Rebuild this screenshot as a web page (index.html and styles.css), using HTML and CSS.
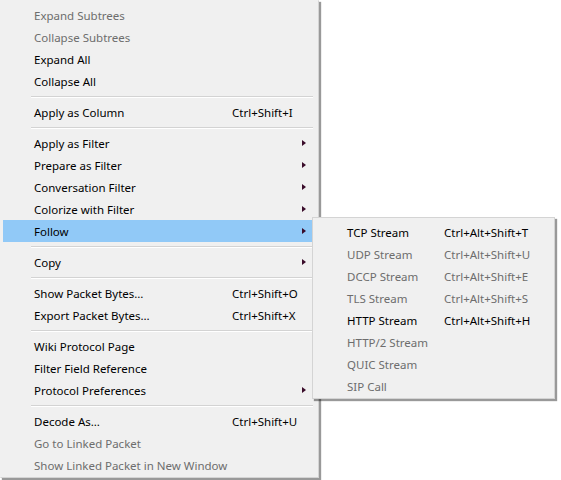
FILE: index.html
```html
<!DOCTYPE html>
<html>
<head>
<meta charset="utf-8">
<link rel="stylesheet" href="styles.css">
</head>
<body>
<div class="menu main">
  <div class="item dis"><span class="label">Expand Subtrees</span></div>
  <div class="item dis"><span class="label">Collapse Subtrees</span></div>
  <div class="item"><span class="label">Expand All</span></div>
  <div class="item"><span class="label">Collapse All</span></div>
  <div class="sep"></div>
  <div class="item"><span class="label">Apply as Column</span><span class="key">Ctrl+Shift+I</span></div>
  <div class="sep"></div>
  <div class="item"><span class="label">Apply as Filter</span><span class="arrow"></span></div>
  <div class="item"><span class="label">Prepare as Filter</span><span class="arrow"></span></div>
  <div class="item"><span class="label">Conversation Filter</span><span class="arrow"></span></div>
  <div class="item"><span class="label">Colorize with Filter</span><span class="arrow"></span></div>
  <div class="item active"><span class="label">Follow</span><span class="arrow"></span></div>
  <div class="sep"></div>
  <div class="item"><span class="label">Copy</span><span class="arrow"></span></div>
  <div class="sep"></div>
  <div class="item"><span class="label">Show Packet Bytes…</span><span class="key">Ctrl+Shift+O</span></div>
  <div class="item"><span class="label">Export Packet Bytes…</span><span class="key">Ctrl+Shift+X</span></div>
  <div class="sep"></div>
  <div class="item"><span class="label">Wiki Protocol Page</span></div>
  <div class="item"><span class="label">Filter Field Reference</span></div>
  <div class="item"><span class="label">Protocol Preferences</span><span class="arrow"></span></div>
  <div class="sep"></div>
  <div class="item"><span class="label">Decode As…</span><span class="key">Ctrl+Shift+U</span></div>
  <div class="item dis"><span class="label">Go to Linked Packet</span></div>
  <div class="item dis"><span class="label">Show Linked Packet in New Window</span></div>
</div>
<div class="menu sub">
  <div class="sitem"><span>TCP Stream</span><span>Ctrl+Alt+Shift+T</span></div>
  <div class="sitem dis"><span>UDP Stream</span><span>Ctrl+Alt+Shift+U</span></div>
  <div class="sitem dis"><span>DCCP Stream</span><span>Ctrl+Alt+Shift+E</span></div>
  <div class="sitem dis"><span>TLS Stream</span><span>Ctrl+Alt+Shift+S</span></div>
  <div class="sitem"><span>HTTP Stream</span><span>Ctrl+Alt+Shift+H</span></div>
  <div class="sitem dis"><span>HTTP/2 Stream</span><span></span></div>
  <div class="sitem dis"><span>QUIC Stream</span><span></span></div>
  <div class="sitem dis"><span>SIP Call</span><span></span></div>
</div>
</body>
</html>
```
FILE: styles.css
```css
html, body {
  margin: 0;
  padding: 0;
  background: #ffffff;
}
body {
  position: relative;
  width: 561px;
  height: 480px;
  overflow: hidden;
  font-family: "Noto Sans", "Open Sans", sans-serif;
  font-size: 11.5px;
  color: #000;
}
.menu {
  background: #f0f0f0;
  border: 1px solid #d4d4d4;
  box-shadow: 2px 2px 1px rgba(0, 0, 0, 0.4);
  box-sizing: border-box;
}
.main {
  width: 319px;
  padding: 3px 2px 1px 2px;
  border-top-color: #f0f0f0;
  border-left-color: #f0f0f0;
}
.item {
  height: 22px;
  box-sizing: border-box;
  padding-top: 1px;
  display: flex;
  align-items: center;
  padding-left: 31px;
  position: relative;
}
.item .label {
  flex: none;
  width: 198px;
  white-space: nowrap;
}
.item .key {
  white-space: nowrap;
}
.item.active {
  background: #91c9f7;
}
.dis {
  color: #6d6d6d;
}
.arrow {
  position: absolute;
  left: 299px;
  top: 8px;
  width: 0;
  height: 0;
  border-top: 3.5px solid transparent;
  border-bottom: 3.5px solid transparent;
  border-left: 4px solid #3a0c2a;
}
.sep {
  height: 9px;
  display: flex;
  align-items: center;
  padding-left: 28px;
  padding-right: 3px;
}
.sep::before {
  content: "";
  display: block;
  flex: 1;
  height: 1px;
  background: #d3d3d3;
  border-bottom: 1px solid #ffffff;
}
.sub {
  position: absolute;
  left: 312px;
  top: 217px;
  width: 243px;
  padding: 3px 2px 1px 2px;
}
.sitem {
  height: 22px;
  box-sizing: border-box;
  padding-top: 1px;
  display: grid;
  grid-template-columns: 97px auto;
  align-items: center;
  padding-left: 32px;
  white-space: nowrap;
}
```
